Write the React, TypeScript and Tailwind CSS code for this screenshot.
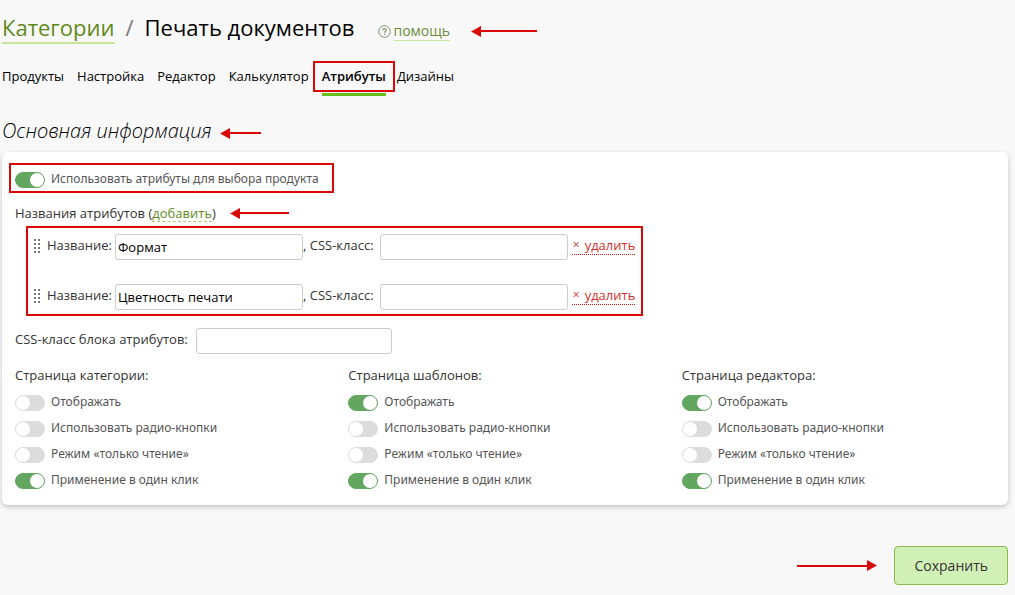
import { useState } from "react";

type ArrowProps = { className?: string; direction?: "left" | "right" };

function Arrow({ className = "", direction = "left" }: ArrowProps) {
  return (
    <span aria-hidden="true" className={`flex shrink-0 items-center text-[#d90707] ${direction === "right" ? "flex-row-reverse" : ""} ${className}`}>
      <svg viewBox="0 0 10 11" className={`h-[11px] w-[10px] shrink-0 ${direction === "right" ? "rotate-180" : ""}`} fill="currentColor">
        <path d="M0 5.5 10 0v11z" />
      </svg>
      <span className="h-[2px] grow bg-[#d90707]" />
    </span>
  );
}

function Toggle({ label, initial = false }: { label: string; initial?: boolean }) {
  const [on, setOn] = useState(initial);
  return (
    <label className="flex h-[26px] w-fit cursor-pointer items-center gap-[6px] text-[#555]">
      <input
        type="checkbox"
        checked={on}
        onChange={() => setOn(!on)}
        className="mt-1 h-4 w-[30px] shrink-0 cursor-pointer appearance-none rounded-full border border-[#dcdcdc] bg-[#dcdcdc] before:block before:size-[14px] before:rounded-full before:bg-white checked:border-[#62a660] checked:bg-[#62a660] checked:before:ml-[14px]"
      />
      <span className="pt-[2px] font-['Noto_Sans',sans-serif] text-[12px] leading-5">{label}</span>
    </label>
  );
}

function DragHandle() {
  return (
    <svg viewBox="0 0 8 16" className="h-4 w-2 shrink-0" fill="#777" aria-hidden="true">
      {[0, 4, 8, 12].map((y) => (
        <g key={y}>
          <rect x="1" y={y} width="2" height="2" />
          <rect x="5" y={y} width="2" height="2" />
        </g>
      ))}
    </svg>
  );
}

const inputClass = "h-[26px] rounded-[3px] border border-[#ccc] bg-white px-[2px] text-[13px] text-black outline-none focus:border-[#8fbc5a]";

function AttributeRow({ name }: { name: string }) {
  return (
    <li className="flex h-[26px] items-center">
      <DragHandle />
      <label className="ml-[6px] flex items-center gap-[3px]">
        <span className="-mt-1">Название:</span>
        <input type="text" defaultValue={name} className={`${inputClass} w-[188px]`} />
      </label>
      <label className="flex items-center gap-[6px]">
        <span className="-mt-1">, CSS-класс:</span>
        <input type="text" className={`${inputClass} w-[188px]`} />
      </label>
      <button type="button" className="-mt-[2px] ml-1 flex h-[18px] items-center border-b border-dotted border-[#e02020] pb-[2px] text-[#d32f2f]">
        <span className="mr-1 w-[9px] text-center text-[12px]">×</span>удалить
      </button>
    </li>
  );
}

const tabs = ["Продукты", "Настройка", "Редактор", "Калькулятор", "Атрибуты", "Дизайны"];

const groups = [
  { title: "Страница категории:", show: false },
  { title: "Страница шаблонов:", show: true },
  { title: "Страница редактора:", show: true },
];

export default function App() {
  return (
    <div className="min-h-screen bg-[#f8f8f8] pt-[11px] pr-[7px] pb-[10px] pl-[2px] font-['Open_Sans','Noto_Sans',sans-serif] text-[13px] leading-5 text-[#333]">
      <header className="flex h-8 items-start">
        <h1 className="flex items-baseline text-[22px] leading-8 text-black">
          <a href="#categories" className="border-b-2 border-[#c8e69b] leading-[29px] text-[#5f8a1a]">Категории</a>
          <span className="mx-[11px] text-[#777]">/</span>
          Печать документов
        </h1>
        <a href="#help" className="mt-[10px] ml-[23px] flex items-center gap-[3px] text-[14px] leading-[19px] text-[#6b8f3a]">
          <svg viewBox="0 0 13 13" className="size-[13px]" fill="none" stroke="#7d9168" aria-hidden="true">
            <circle cx="6.5" cy="6.5" r="5.8" />
            <path d="M4.8 5.3c0-2.3 3.5-2.2 3.5-.2 0 1.2-1.7 1.3-1.7 2.7M6.6 8.8v1.2" strokeWidth="1.2" />
          </svg>
          <span className="border-b border-[#c8e69b]">помощь</span>
        </a>
        <Arrow className="ml-[21px] w-[66px] self-center pt-2" />
      </header>

      <nav className="mt-[18px] flex h-[31px] items-center gap-[13px] text-black">
        {tabs.map((tab) =>
          tab === "Атрибуты" ? (
            <a key={tab} href="#attributes" aria-current="page" className="relative -mr-[11px] -ml-[9px] flex h-[31px] items-center border-2 border-[#d90707] px-[7px] pb-[2px] font-semibold">
              {tab}
              <span className="absolute inset-x-[7px] -bottom-[6px] h-[3px] bg-[#66c11f]" />
            </a>
          ) : (
            <a key={tab} href={`#${tab}`} className="pb-[2px]">{tab}</a>
          ),
        )}
      </nav>

      <div className="mt-[25px] flex h-7 items-center gap-2">
        <h2 className="text-[20px] leading-7 font-light text-black italic">Основная информация</h2>
        <Arrow className="w-[41px] pt-1" />
      </div>

      <section className="mt-[7px] rounded-md bg-white px-[13px] pt-[11px] pb-[13px] shadow-[0_2px_5px_rgba(0,0,0,0.22)]">
        <div className="-ml-[6px] flex h-[30px] w-fit items-center border-2 border-[#d90707] pr-[13px] pl-1">
          <Toggle label="Использовать атрибуты для выбора продукта" initial />
        </div>
        <div className="mt-[10px] flex items-center gap-[14px]">
          <p>
            Названия атрибутов (
            <button type="button" className="border-b border-dashed border-[#a9c97c] leading-4 text-[#5f8a1a]">добавить</button>)
          </p>
          <Arrow className="w-[59px]" />
        </div>
        <ul className="mt-[3px] ml-[11px] flex w-fit flex-col gap-6 border-2 border-[#d90707] pt-[6px] pr-[6px] pb-1 pl-[5px]">
          <AttributeRow name="Формат" />
          <AttributeRow name="Цветность печати" />
        </ul>
        <label className="mt-3 flex w-fit items-center gap-2">
          <span className="-mt-1">CSS-класс блока атрибутов:</span>
          <input type="text" className={`${inputClass} w-[196px]`} />
        </label>
        <div className="mt-[11px] grid grid-cols-3 gap-5">
          {groups.map(({ title, show }) => (
            <fieldset key={title}>
              <legend className="mb-[3px]">{title}</legend>
              <Toggle label="Отображать" initial={show} />
              <Toggle label="Использовать радио-кнопки" />
              <Toggle label="Режим «только чтение»" />
              <Toggle label="Применение в один клик" initial />
            </fieldset>
          ))}
        </div>
      </section>

      <div className="mt-[41px] flex items-center justify-end gap-[17px]">
        <Arrow direction="right" className="w-20" />
        <button type="button" className="h-[39px] rounded-[4px] border border-[#8fb850] bg-[#d1f0b5] px-[19px] text-[14px] text-[#333]">Сохранить</button>
      </div>
    </div>
  );
}
